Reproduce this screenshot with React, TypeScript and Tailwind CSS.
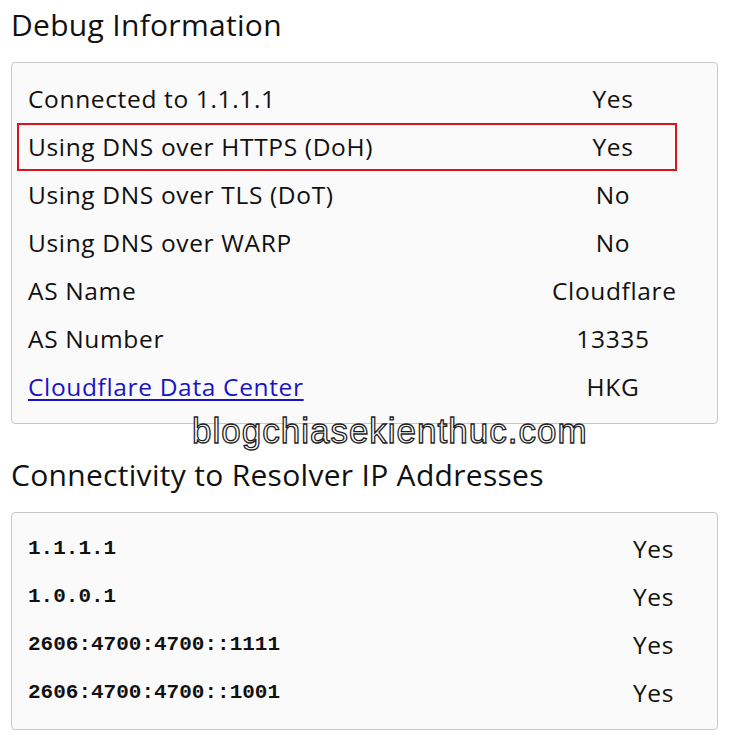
import React from "react";

const debugRows = [
  { label: "Connected to 1.1.1.1", value: "Yes" },
  { label: "Using DNS over HTTPS (DoH)", value: "Yes", highlight: true },
  { label: "Using DNS over TLS (DoT)", value: "No" },
  { label: "Using DNS over WARP", value: "No" },
  { label: "AS Name", value: "Cloudflare" },
  { label: "AS Number", value: "13335" },
  { label: "Cloudflare Data Center", value: "HKG", link: true },
];

const resolvers = [
  "1.1.1.1",
  "1.0.0.1",
  "2606:4700:4700::1111",
  "2606:4700:4700::1001",
];

export default function App() {
  return (
    <main className="relative w-[730px] h-[748px] bg-white px-[11px] pt-[7px] font-['Open_Sans',sans-serif] text-[#111]">
      {/* Debug info */}
      <h1 className="text-[30px] leading-[36px] tracking-[0.3px] mb-[19px]">Debug Information</h1>
      <section className="w-[707px] border border-[#c8c8c8] rounded-[4px] bg-[#fafafa] py-[12px] pl-[5px]">
        {debugRows.map((row) => (
          <div
            key={row.label}
            className={
              "flex items-center h-[48px] w-[660px] border-2 text-[24.5px] tracking-[0.65px] " +
              (row.highlight ? "border-[#d8141e]" : "border-transparent")
            }
          >
            <span className="flex-1 pl-[9px]">
              {row.link ? (
                <a href="#" className="text-[#1a14c8] underline underline-offset-[3px]">
                  {row.label}
                </a>
              ) : (
                row.label
              )}
            </span>
            <span className="w-[122px] mr-[1px] text-center">{row.value}</span>
          </div>
        ))}
      </section>

      {/* Resolver connectivity */}
      <h2 className="text-[30px] leading-[36px] tracking-[0.3px] mt-[33px] mb-[19px]">
        Connectivity to Resolver IP Addresses
      </h2>
      <section className="w-[707px] border border-[#c8c8c8] rounded-[4px] bg-[#fafafa] py-[12px] pl-[5px]">
        {resolvers.map((ip) => (
          <div key={ip} className="flex items-center h-[48px] w-[660px] border-2 border-transparent">
            <span className="flex-1 pl-[9px] font-['Liberation_Mono',monospace] font-bold text-[21px]">
              {ip}
            </span>
            <span className="mr-[1px] text-[24.5px] tracking-[0.65px]">Yes</span>
          </div>
        ))}
      </section>

      {/* watermark */}
      <div className="absolute left-[192px] top-[411px] font-['Liberation_Sans',Arial,sans-serif] text-[35px] leading-[40px] text-white [-webkit-text-stroke:1.3px_#1e1e1e] tracking-[1px]">
        blogchiasekienthuc.com
      </div>
    </main>
  );
}
